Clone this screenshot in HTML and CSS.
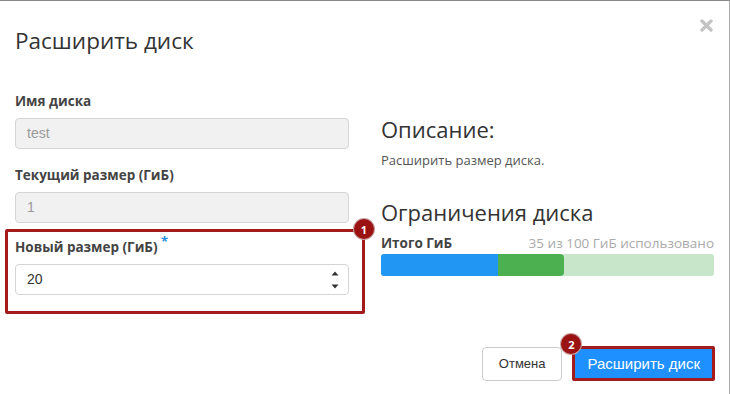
FILE: index.html
```html
<!DOCTYPE html>
<html lang="ru">
<head>
  <meta charset="UTF-8">
  <title>Расширить диск</title>
  <link rel="stylesheet" href="styles.css">
</head>
<body>
  <div class="modal">
    <div class="modal-header">
      <h3 class="modal-title">Расширить диск</h3>
      <span class="close">
        <svg width="13" height="13" viewBox="0 0 13 13"><path d="M2 2 L11 11 M11 2 L2 11" stroke="#c4c4c4" stroke-width="3.4" stroke-linecap="round"/></svg>
      </span>
    </div>

    <div class="modal-body">
      <div class="form-col">
        <div class="field">
          <label>Имя диска</label>
          <div class="input disabled">test</div>
        </div>
        <div class="field">
          <label>Текущий размер (ГиБ)</label>
          <div class="input disabled">1</div>
        </div>
        <div class="field highlight">
          <label>Новый размер (ГиБ) <span class="req">*</span></label>
          <div class="input">
            <span>20</span>
            <span class="spin">
              <svg width="8" height="20" viewBox="0 0 8 20"><path d="M0.5 5.5 L4 1.5 L7.5 5.5 Z M0.5 14.5 L7.5 14.5 L4 18.5 Z" fill="#333"/></svg>
            </span>
          </div>
          <span class="badge badge-one">1</span>
        </div>
      </div>

      <div class="info-col">
        <h4>Описание:</h4>
        <p>Расширить размер диска.</p>
        <h4 class="limits">Ограничения диска</h4>
        <div class="quota-head">
          <strong>Итого ГиБ</strong>
          <span>35 из 100 ГиБ использовано</span>
        </div>
        <div class="bar">
          <div class="bar-used" style="width: 35%"></div>
          <div class="bar-new" style="width: 20%"></div>
        </div>
      </div>
    </div>

    <div class="modal-footer">
      <button class="btn">Отмена</button>
      <div class="submit-wrap">
        <button class="btn btn-primary">Расширить диск</button>
        <span class="badge badge-two">2</span>
      </div>
    </div>
  </div>
</body>
</html>
```

FILE: styles.css
```css
body {
  margin: 0;
  background: #fff;
  font-family: "Open Sans", "Noto Sans", sans-serif;
  color: #333;
}

.modal {
  width: 730px;
  height: 394px;
  box-sizing: border-box;
  border-top: 1px solid #888;
  border-right: 1px solid #aaa;
  display: flex;
  flex-direction: column;
}

.modal-header {
  display: flex;
  justify-content: space-between;
  align-items: flex-start;
  padding: 24px 15px 0 15px;
  height: 61px;
  box-sizing: border-box;
}
.modal-title {
  margin: 0;
  font-size: 22.5px;
  font-weight: 400;
  line-height: 32px;
  color: #333;
}
.close {
  display: flex;
  margin-top: -6px;
  margin-right: 1px;
}

.modal-body {
  display: flex;
  gap: 32px;
  padding: 0 15px;
  height: 264px;
}

.form-col {
  width: 334px;
  padding-top: 30px;
}
.field {
  margin-bottom: 17px;
  position: relative;
}
.field label {
  display: block;
  font-size: 13.5px;
  font-weight: 700;
  color: #444;
  margin-bottom: 8px;
  line-height: 18px;
}
.input {
  height: 31px;
  box-sizing: border-box;
  border: 1px solid #d5d5d5;
  border-radius: 4px;
  padding: 0 9px 0 11px;
  font-family: "Liberation Sans", Arial, sans-serif;
  font-size: 14px;
  line-height: 29px;
  color: #333;
  display: flex;
  justify-content: space-between;
  align-items: center;
  background: #fff;
}
.input.disabled {
  background: #f1f1f1;
  color: #9a9a9a;
}
.spin {
  display: flex;
}
.req {
  position: relative;
  top: -6px;
  color: #2a8fe0;
  font-size: 13px;
}

.highlight {
  margin: -11px -16px 0 -10px;
  padding: 6px 13px 16px 7px;
  border: 3px solid #a31b1b;
  border-radius: 2px;
}

.badge {
  position: absolute;
  width: 20px;
  height: 20px;
  border-radius: 50%;
  background: #9b1212;
  color: #fff;
  font-size: 11px;
  font-weight: 700;
  display: flex;
  align-items: center;
  justify-content: center;
  box-shadow: 0 0 0 1px #c9a0a0;
}
.badge-one {
  top: -13px;
  right: -12px;
}
.badge-two {
  top: -12px;
  left: -11px;
}

.info-col {
  flex: 1;
  padding-top: 53px;
}
.info-col h4 {
  margin: 0;
  font-size: 22px;
  font-weight: 400;
  line-height: 28px;
  color: #333;
}
.info-col p {
  margin: 8px 0 0 0;
  font-size: 13px;
  color: #555;
  line-height: 18px;
}
.info-col h4.limits {
  margin-top: 29px;
}
.quota-head {
  display: flex;
  justify-content: space-between;
  font-size: 13.5px;
  margin-top: 8px;
  line-height: 18px;
}
.quota-head strong {
  color: #444;
}
.quota-head span {
  color: #aaa;
}
.bar {
  display: flex;
  height: 22px;
  margin-top: 2px;
  background: #c8e6c9;
  border-radius: 3px;
  overflow: hidden;
}
.bar-used {
  background: #2196f3;
}
.bar-new {
  background: #4caf50;
  border-radius: 0 4px 4px 0;
}

.modal-footer {
  display: flex;
  justify-content: flex-end;
  align-items: center;
  gap: 10px;
  padding: 20px 14px 0 0;
}
.submit-wrap {
  position: relative;
}
.btn {
  height: 34px;
  padding: 0 16px;
  font-family: "Liberation Sans", Arial, sans-serif;
  font-size: 13px;
  border: 1px solid #ccc;
  border-radius: 4px;
  background: #fff;
  color: #333;
}
.btn-primary {
  height: 35px;
  padding: 0 12px;
  background: #1e90ff;
  color: #fff;
  border: 3px solid #a31b1b;
  border-radius: 2px;
  font-size: 15px;
}
```
